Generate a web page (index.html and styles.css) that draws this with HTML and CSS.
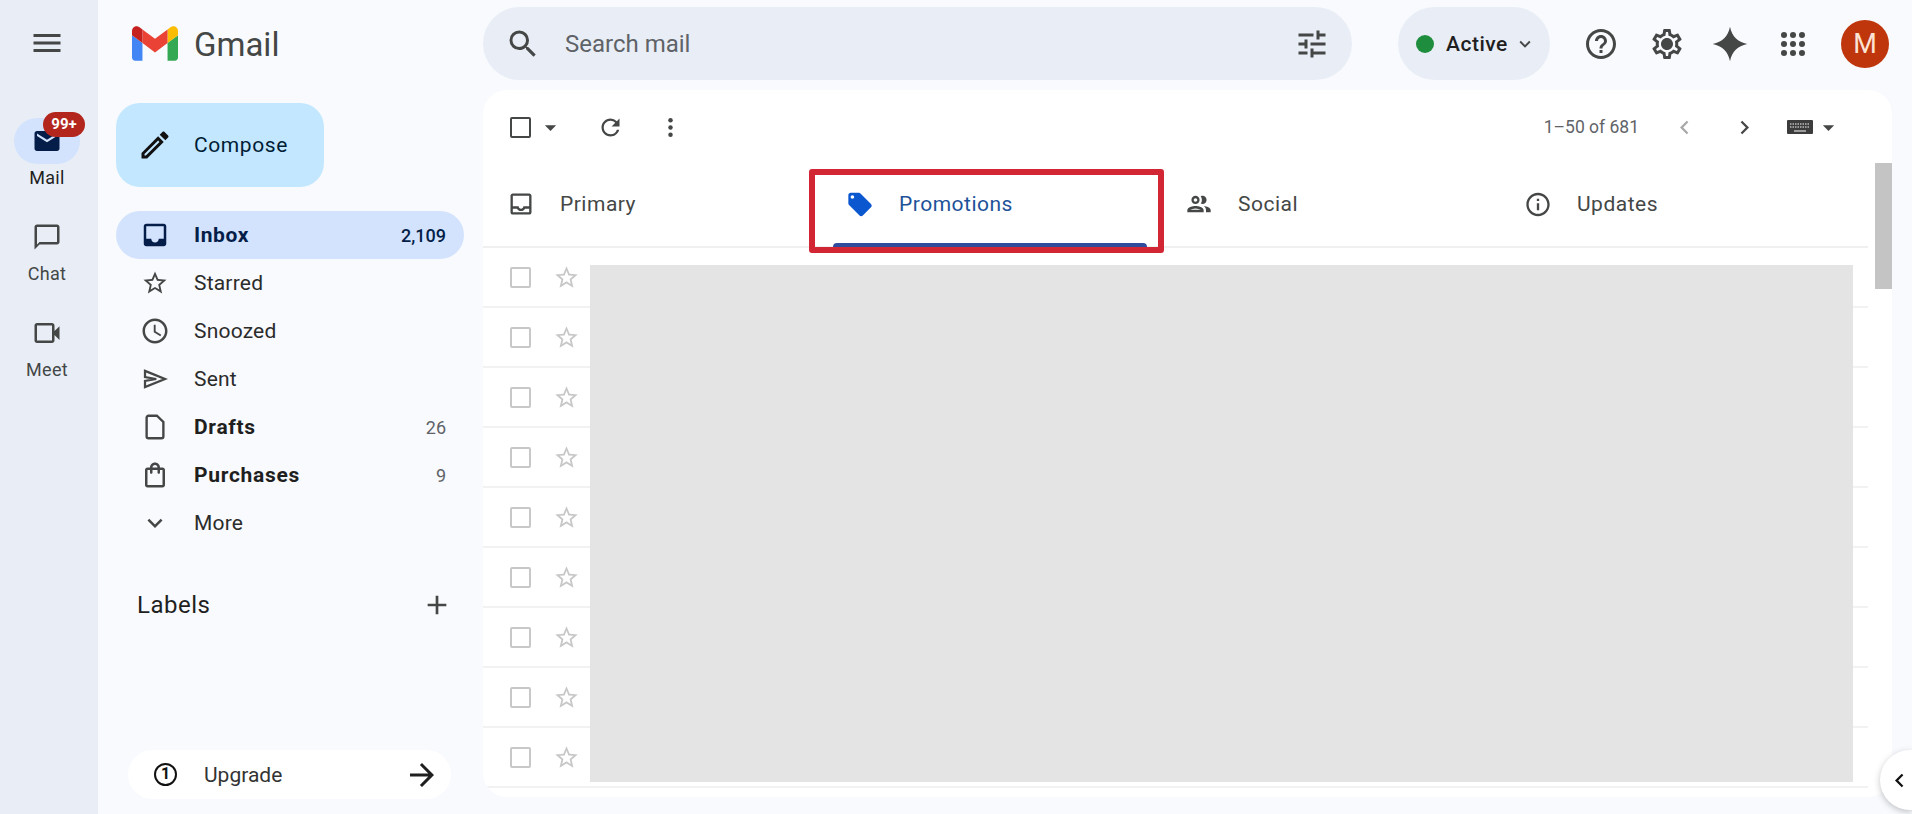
FILE: index.html
```html
<!DOCTYPE html>
<html lang="en">
<head>
    <meta charset="UTF-8">
    <title>Inbox - Gmail</title>
    <link rel="stylesheet" href="styles.css">
</head>
<body>
    <svg class="sprite" xmlns="http://www.w3.org/2000/svg">
        <symbol id="star" viewBox="0 0 24 24"><path d="M22 9.24l-7.19-.62L12 2 9.19 8.63 2 9.24l5.46 4.73L5.82 21 12 17.27 18.18 21l-1.63-7.03L22 9.24zM12 15.4l-3.76 2.27 1-4.28-3.32-2.88 4.38-.38L12 6.1l1.71 4.04 4.38.38-3.32 2.88 1 4.28L12 15.4z"/></symbol>
        <symbol id="caret" viewBox="0 0 24 24"><path d="M7 10l5 5 5-5z"/></symbol>
    </svg>

    <nav class="rail">
        <button class="rail-menu">
            <svg width="36" height="36" viewBox="0 0 24 24"><path d="M3 18h18v-2H3v2zm0-5h18v-2H3v2zm0-7v2h18V6H3z"/></svg>
        </button>
        <div class="rail-item active">
            <div class="rail-icon">
                <svg width="30" height="30" viewBox="0 0 24 24"><path d="M20 4H4c-1.1 0-2 .9-2 2v12c0 1.1.9 2 2 2h16c1.1 0 2-.9 2-2V6c0-1.1-.9-2-2-2zm0 4l-8 5-8-5V6l8 5 8-5v2z"/></svg>
            </div>
            <span class="badge">99+</span>
            <span class="rail-label">Mail</span>
        </div>
        <div class="rail-item">
            <div class="rail-icon">
                <svg width="30" height="30" viewBox="0 0 24 24"><path d="M20 2H4c-1.1 0-2 .9-2 2v18l4-4h14c1.1 0 2-.9 2-2V4c0-1.1-.9-2-2-2zm0 14H6l-2 2V4h16v12z"/></svg>
            </div>
            <span class="rail-label">Chat</span>
        </div>
        <div class="rail-item">
            <div class="rail-icon">
                <svg width="30" height="30" viewBox="0 0 24 24"><path d="M18 10.48V6c0-1.1-.9-2-2-2H4c-1.1 0-2 .9-2 2v12c0 1.1.9 2 2 2h12c1.1 0 2-.9 2-2v-4.48l4 3.98v-11l-4 3.98zm-2-.79V18H4V6h12v3.69z"/></svg>
            </div>
            <span class="rail-label">Meet</span>
        </div>
    </nav>

    <div class="app">
        <header class="topbar">
            <div class="brand">
                <svg class="brand-logo" width="46" height="35" viewBox="52 42 88 66">
                    <path fill="#4285f4" d="M58 108h14V74L52 59v43c0 3.32 2.69 6 6 6"/>
                    <path fill="#34a853" d="M120 108h14c3.32 0 6-2.69 6-6V59l-20 15"/>
                    <path fill="#fbbc04" d="M120 48v26l20-15v-8c0-7.42-8.47-11.65-14.4-7.2"/>
                    <path fill="#ea4335" d="M72 74V48l24 18 24-18v26L96 92"/>
                    <path fill="#c5221f" d="M52 51v8l20 15V48l-5.6-4.2c-5.94-4.45-14.4-.22-14.4 7.2"/>
                </svg>
                <span class="brand-name">Gmail</span>
            </div>
            <div class="search">
                <svg width="36" height="36" viewBox="0 0 24 24"><path d="M15.5 14h-.79l-.28-.27A6.471 6.471 0 0 0 16 9.5 6.5 6.5 0 1 0 9.5 16c1.61 0 3.09-.59 4.23-1.57l.27.28v.79l5 4.99L20.49 19l-4.99-5zm-6 0C7.01 14 5 11.99 5 9.5S7.01 5 9.5 5 14 7.01 14 9.5 11.99 14 9.5 14z"/></svg>
                <span class="search-text">Search mail</span>
                <svg width="36" height="36" viewBox="0 0 24 24"><path d="M3 17v2h6v-2H3zM3 5v2h10V5H3zm10 16v-2h8v-2h-8v-2h-2v6h2zM7 9v2H3v2h4v2h2V9H7zm14 4v-2H11v2h10zm-6-4h2V7h4V5h-4V3h-2v6z"/></svg>
            </div>
            <div class="status">
                <span class="status-dot"></span>
                <span class="status-text">Active</span>
                <svg width="22" height="22" viewBox="0 0 24 24"><path d="M16.59 8.59 12 13.17 7.41 8.59 6 10l6 6 6-6z"/></svg>
            </div>
            <div class="top-icons">
                <svg class="icon-help" width="36" height="36" viewBox="0 0 24 24"><path d="M11 18h2v-2h-2v2zm1-16C6.48 2 2 6.48 2 12s4.48 10 10 10 10-4.48 10-10S17.52 2 12 2zm0 18c-4.41 0-8-3.59-8-8s3.59-8 8-8 8 3.59 8 8-3.59 8-8 8zm0-14c-2.21 0-4 1.79-4 4h2c0-1.1.9-2 2-2s2 .9 2 2c0 2-3 1.75-3 5h2c0-2.25 3-2.5 3-5 0-2.21-1.79-4-4-4z"/></svg>
                <svg class="icon-gear" width="36" height="36" viewBox="0 0 24 24"><path d="M19.43 12.98c.04-.32.07-.64.07-.98 0-.34-.03-.66-.07-.98l2.11-1.65c.19-.15.24-.42.12-.64l-2-3.46c-.09-.16-.26-.25-.44-.25-.06 0-.12.01-.17.03l-2.49 1c-.52-.4-1.08-.73-1.69-.98l-.38-2.65C14.46 2.18 14.25 2 14 2h-4c-.25 0-.46.18-.49.42l-.38 2.65c-.61.25-1.17.59-1.69.98l-2.49-1c-.06-.02-.12-.03-.18-.03-.17 0-.34.09-.43.25l-2 3.46c-.13.22-.07.49.12.64l2.11 1.65c-.04.32-.07.65-.07.98 0 .33.03.66.07.98l-2.11 1.65c-.19.15-.24.42-.12.64l2 3.46c.09.16.26.25.44.25.06 0 .12-.01.17-.03l2.49-1c.52.4 1.08.73 1.69.98l.38 2.65c.03.24.24.42.49.42h4c.25 0 .46-.18.49-.42l.38-2.65c.61-.25 1.17-.59 1.69-.98l2.49 1c.06.02.12.03.18.03.17 0 .34-.09.43-.25l2-3.46c.12-.22.07-.49-.12-.64l-2.11-1.65zm-1.98-1.71c.04.31.05.52.05.73 0 .21-.02.43-.05.73l-.14 1.13.89.7 1.08.84-.7 1.21-1.27-.51-1.04-.42-.9.68c-.43.32-.84.56-1.25.73l-1.06.43-.16 1.13-.2 1.35h-1.4l-.19-1.35-.16-1.13-1.06-.43c-.43-.18-.83-.41-1.23-.71l-.91-.7-1.06.43-1.27.51-.7-1.21 1.08-.84.89-.7-.14-1.13c-.03-.31-.05-.54-.05-.74s.02-.43.05-.73l.14-1.13-.89-.7-1.08-.84.7-1.21 1.27.51 1.04.42.9-.68c.43-.32.84-.56 1.25-.73l1.06-.43.16-1.13.2-1.35h1.39l.19 1.35.16 1.13 1.06.43c.43.18.83.41 1.23.71l.91.7 1.06-.43 1.27-.51.7 1.21-1.07.85-.89.7.14 1.13zM12 8c-2.21 0-4 1.79-4 4s1.79 4 4 4 4-1.79 4-4-1.79-4-4-4z"/></svg>
                <svg class="icon-spark" width="36" height="36" viewBox="0 0 24 24"><path d="M12 .5c1.300 6.400 5.100 10.200 11.500 11.500-6.400 1.300-10.200 5.100-11.500 11.500-1.300-6.400-5.100-10.200-11.500-11.500 6.400-1.300 10.200-5.100 11.500-11.500z"/></svg>
                <svg class="icon-apps" width="36" height="36" viewBox="0 0 24 24">
                    <circle cx="6" cy="6" r="2"/><circle cx="12" cy="6" r="2"/><circle cx="18" cy="6" r="2"/>
                    <circle cx="6" cy="12" r="2"/><circle cx="12" cy="12" r="2"/><circle cx="18" cy="12" r="2"/>
                    <circle cx="6" cy="18" r="2"/><circle cx="12" cy="18" r="2"/><circle cx="18" cy="18" r="2"/>
                </svg>
                <span class="avatar">M</span>
            </div>
        </header>

        <div class="content">
            <aside class="sidebar">
                <button class="compose">
                    <svg width="36" height="36" viewBox="0 0 24 24"><path d="M3 17.25V21h3.75L17.81 9.94l-3.75-3.75L3 17.25zM5.92 19H5v-.92l9.06-9.06.92.92L5.92 19zM20.71 5.63l-2.34-2.34c-.2-.2-.45-.29-.71-.29s-.51.1-.7.29l-1.83 1.83 3.75 3.75 1.83-1.83c.39-.39.39-1.02 0-1.41z"/></svg>
                    <span>Compose</span>
                </button>

                <div class="nav-list">
                    <div class="nav-row selected">
                        <svg width="30" height="30" viewBox="0 0 24 24"><path d="M19 3H4.99c-1.11 0-1.98.89-1.98 2L3 19c0 1.1.88 2 1.99 2H19c1.1 0 2-.9 2-2V5c0-1.11-.9-2-2-2zm0 12h-4c0 1.66-1.35 3-3 3s-3-1.34-3-3H4.99V5H19v10z"/></svg>
                        <span class="nav-name">Inbox</span>
                        <span class="nav-count">2,109</span>
                    </div>
                    <div class="nav-row">
                        <svg width="30" height="30" viewBox="-1 -1 26 26"><use href="#star" width="24" height="24"/></svg>
                        <span class="nav-name">Starred</span>
                    </div>
                    <div class="nav-row">
                        <svg width="30" height="30" viewBox="0 0 24 24"><path d="M11.99 2C6.47 2 2 6.48 2 12s4.47 10 9.99 10C17.52 22 22 17.52 22 12S17.52 2 11.99 2zM12 20c-4.42 0-8-3.58-8-8s3.58-8 8-8 8 3.58 8 8-3.58 8-8 8zm.5-13H11v6l5.25 3.15.75-1.23-4.5-2.67z"/></svg>
                        <span class="nav-name">Snoozed</span>
                    </div>
                    <div class="nav-row">
                        <svg width="30" height="30" viewBox="0 0 24 24"><path fill="none" stroke="#444746" stroke-width="1.800" d="M4 5.500 20 12 4 18.500v-5l9-1.500-9-1.500z"/></svg>
                        <span class="nav-name">Sent</span>
                    </div>
                    <div class="nav-row bold">
                        <svg width="30" height="30" viewBox="0 0 24 24"><path fill="none" stroke="#444746" stroke-width="1.900" d="M13.500 3H6.800A1.500 1.500 0 0 0 5.300 4.500v15A1.500 1.500 0 0 0 6.800 21h10.400a1.500 1.500 0 0 0 1.500-1.500V8z"/></svg>
                        <span class="nav-name">Drafts</span>
                        <span class="nav-count">26</span>
                    </div>
                    <div class="nav-row bold">
                        <svg width="30" height="30" viewBox="0 0 24 24"><path d="M18 6h-2c0-2.210-1.790-4-4-4S8 3.790 8 6H6c-1.100 0-2 .9-2 2v12c0 1.100.9 2 2 2h12c1.100 0 2-.9 2-2V8c0-1.100-.9-2-2-2zm-6-2c1.100 0 2 .9 2 2h-4c0-1.100.9-2 2-2zm6 16H6V8h2v2c0 .55.45 1 1 1s1-.45 1-1V8h4v2c0 .55.45 1 1 1s1-.45 1-1V8h2v12z"/></svg>
                        <span class="nav-name">Purchases</span>
                        <span class="nav-count">9</span>
                    </div>
                    <div class="nav-row">
                        <svg width="30" height="30" viewBox="0 0 24 24"><path d="M16.59 8.59 12 13.17 7.41 8.59 6 10l6 6 6-6z"/></svg>
                        <span class="nav-name">More</span>
                    </div>
                </div>

                <div class="labels-head">
                    <span>Labels</span>
                    <svg width="32" height="32" viewBox="0 0 24 24"><path d="M19 13h-6v6h-2v-6H5v-2h6V5h2v6h6v2z"/></svg>
                </div>

                <div class="upgrade">
                    <span class="upgrade-num">1</span>
                    <span class="upgrade-text">Upgrade</span>
                    <svg width="36" height="36" viewBox="0 0 24 24"><path d="M12 4l-1.410 1.410L16.170 11H4v2h12.170l-5.580 5.590L12 20l8-8z"/></svg>
                </div>
            </aside>

            <main class="card">
                <div class="toolbar">
                    <span class="check dark"></span>
                    <svg class="tool-caret" width="27" height="27" viewBox="0 0 24 24"><use href="#caret"/></svg>
                    <svg class="tool-refresh" width="27" height="27" viewBox="0 0 24 24"><path d="M17.650 6.350A7.958 7.958 0 0 0 12 4c-4.420 0-7.990 3.580-7.990 8s3.570 8 7.990 8c3.730 0 6.840-2.550 7.730-6h-2.080A5.990 5.990 0 0 1 12 18c-3.310 0-6-2.690-6-6s2.690-6 6-6c1.660 0 3.140.690 4.220 1.780L13 11h7V4l-2.350 2.350z"/></svg>
                    <svg class="tool-more" width="27" height="27" viewBox="0 0 24 24"><circle cx="12" cy="5.500" r="2"/><circle cx="12" cy="12" r="2"/><circle cx="12" cy="18.500" r="2"/></svg>
                    <span class="pager">1–50 of 681</span>
                    <svg class="pager-prev" width="27" height="27" viewBox="0 0 24 24"><path d="M15.410 7.410 14 6l-6 6 6 6 1.410-1.410L10.830 12z"/></svg>
                    <svg class="pager-next" width="27" height="27" viewBox="0 0 24 24"><path d="M10 6 8.590 7.410 13.170 12l-4.580 4.590L10 18l6-6z"/></svg>
                    <svg class="keyboard" width="26" height="14" viewBox="0 0 26 14">
                        <rect width="26" height="14" rx="1" fill="#3c3c3c"/>
                        <path stroke="#bbb" stroke-width="1.500" stroke-dasharray="1.500 1" d="M3 4h20M3 7h20"/>
                        <path stroke="#bbb" stroke-width="1.500" d="M7 11h12"/>
                    </svg>
                    <svg class="tool-caret-end" width="27" height="27" viewBox="0 0 24 24"><use href="#caret"/></svg>
                </div>

                <div class="tabs">
                    <div class="tab">
                        <svg width="28" height="28" viewBox="0 0 24 24"><path d="M19 3H5c-1.100 0-2 .9-2 2v14c0 1.100.9 2 2 2h14c1.100 0 2-.9 2-2V5c0-1.100-.9-2-2-2zm0 16H5v-3h3.560c.69 1.190 1.970 2 3.450 2s2.750-.81 3.450-2H19v3zm0-5h-4.990c0 1.100-.9 2-2 2s-2-.9-2-2H5V5h14v9z"/></svg>
                        <span>Primary</span>
                    </div>
                    <div class="tab current">
                        <svg width="29" height="29" viewBox="0 0 24 24"><path d="M21.410 11.580l-9-9C12.050 2.220 11.550 2 11 2H4c-1.100 0-2 .9-2 2v7c0 .55.22 1.050.59 1.420l9 9c.36.36.86.58 1.410.58.55 0 1.050-.22 1.410-.59l7-7c.37-.36.59-.86.59-1.410 0-.55-.23-1.060-.59-1.420zM5.500 7C4.670 7 4 6.330 4 5.500S4.670 4 5.500 4 7 4.670 7 5.500 6.330 7 5.500 7z"/></svg>
                        <span>Promotions</span>
                    </div>
                    <div class="tab">
                        <svg width="30" height="30" viewBox="0 0 24 24"><path d="M9 13.750c-2.340 0-7 1.170-7 3.500V19h14v-1.750c0-2.330-4.660-3.500-7-3.500zM4.340 17c.84-.58 2.870-1.250 4.660-1.250s3.820.67 4.660 1.250H4.340zM9 12c1.930 0 3.500-1.570 3.500-3.500S10.930 5 9 5 5.500 6.570 5.500 8.500 7.070 12 9 12zm0-5c.83 0 1.500.67 1.500 1.500S9.830 10 9 10s-1.500-.67-1.500-1.500S8.170 7 9 7zm7.040 6.810c1.160.84 1.960 1.960 1.960 3.440V19h4v-1.750c0-2.020-3.500-3.170-5.960-3.440zM15 12c1.930 0 3.500-1.570 3.500-3.500S16.930 5 15 5c-.54 0-1.040.13-1.500.35.63.89 1 1.980 1 3.150s-.37 2.260-1 3.150c.46.22.96.35 1.500.35z"/></svg>
                        <span>Social</span>
                    </div>
                    <div class="tab">
                        <svg width="29" height="29" viewBox="0 0 24 24"><path d="M11 7h2v2h-2zm0 4h2v6h-2zm1-9C6.480 2 2 6.480 2 12s4.480 10 10 10 10-4.480 10-10S17.520 2 12 2zm0 18c-4.410 0-8-3.590-8-8s3.590-8 8-8 8 3.590 8 8-3.590 8-8 8z"/></svg>
                        <span>Updates</span>
                    </div>
                </div>

                <div class="rows">
                    <div class="row"><span class="check"></span><svg class="row-star" width="27" height="27" viewBox="0 0 24 24"><use href="#star"/></svg></div>
                    <div class="row"><span class="check"></span><svg class="row-star" width="27" height="27" viewBox="0 0 24 24"><use href="#star"/></svg></div>
                    <div class="row"><span class="check"></span><svg class="row-star" width="27" height="27" viewBox="0 0 24 24"><use href="#star"/></svg></div>
                    <div class="row"><span class="check"></span><svg class="row-star" width="27" height="27" viewBox="0 0 24 24"><use href="#star"/></svg></div>
                    <div class="row"><span class="check"></span><svg class="row-star" width="27" height="27" viewBox="0 0 24 24"><use href="#star"/></svg></div>
                    <div class="row"><span class="check"></span><svg class="row-star" width="27" height="27" viewBox="0 0 24 24"><use href="#star"/></svg></div>
                    <div class="row"><span class="check"></span><svg class="row-star" width="27" height="27" viewBox="0 0 24 24"><use href="#star"/></svg></div>
                    <div class="row"><span class="check"></span><svg class="row-star" width="27" height="27" viewBox="0 0 24 24"><use href="#star"/></svg></div>
                    <div class="row"><span class="check"></span><svg class="row-star" width="27" height="27" viewBox="0 0 24 24"><use href="#star"/></svg></div>
                </div>

                <!-- things drawn over the list -->
                <div class="redacted"></div>
                <div class="highlight"></div>
                <div class="scroll-thumb"></div>
            </main>
        </div>
    </div>

    <div class="side-toggle">
        <svg width="27" height="27" viewBox="0 0 24 24"><path d="M15.410 7.410 14 6l-6 6 6 6 1.410-1.410L10.830 12z"/></svg>
    </div>
</body>
</html>
```

FILE: styles.css
```css
/* Basic styling */
* {
    box-sizing: border-box;
}
body {
    font-family: Roboto, "Liberation Sans", sans-serif;
    background-color: #f8fafd;
    color: #1f1f1f;
    margin: 0;
    height: 100vh;
    display: flex;
    overflow: hidden;
    position: relative;
}
svg {
    fill: #444746;
    flex-shrink: 0;
    display: block;
}
button {
    border: none;
    background: none;
    padding: 0;
    font: inherit;
    color: inherit;
}
.sprite {
    display: none;
}

/* left rail */
.rail {
    width: 98px;
    flex-shrink: 0;
    background-color: #e9eef6;
    padding: 25px 4px 0 0;
    display: flex;
    flex-direction: column;
    align-items: center;
}
.rail-menu {
    height: 36px;
    margin-bottom: 57px;
}
.rail-item {
    width: 94px;
    height: 96px;
    position: relative;
    display: flex;
    flex-direction: column;
    align-items: center;
}
.rail-icon {
    width: 66px;
    height: 46px;
    border-radius: 23px;
    display: flex;
    align-items: center;
    justify-content: center;
}
.rail-item.active .rail-icon {
    background-color: #d3e3fd;
}
.rail-item.active svg {
    fill: #041e49;
}
.rail-label {
    font-size: 18px;
    line-height: 24px;
    margin-top: 2px;
    letter-spacing: 0.3px;
    color: #444746;
}
.rail-item.active .rail-label {
    color: #1f1f1f;
}
.badge {
    position: absolute;
    left: 43px;
    top: -6px;
    width: 42px;
    height: 25px;
    border-radius: 13px;
    background-color: #b3261e;
    color: #fff;
    font-size: 15px;
    font-weight: 700;
    line-height: 25px;
    text-align: center;
}

/* header */
.app {
    flex: 1;
    min-width: 0;
    display: flex;
    flex-direction: column;
}
.topbar {
    height: 90px;
    flex-shrink: 0;
    display: flex;
    align-items: center;
    padding-bottom: 3px;
}
.brand {
    width: 385px;
    padding-left: 34px;
    display: flex;
    align-items: center;
    gap: 16px;
}
.brand-name {
    font-size: 33px;
    padding-top: 1px;
    color: #444746;
}
.search {
    width: 869px;
    height: 73px;
    border-radius: 37px;
    background-color: #e9eef6;
    display: flex;
    align-items: center;
    padding: 0 22px;
}
.search-text {
    flex: 1;
    margin-left: 24px;
    font-size: 24px;
    color: #5f6368;
}
.status {
    width: 152px;
    height: 73px;
    margin-left: 46px;
    border-radius: 37px;
    background-color: #e9eef6;
    display: flex;
    align-items: center;
    padding-left: 18px;
}
.status-dot {
    width: 18px;
    height: 18px;
    border-radius: 50%;
    background-color: #1e8e3e;
}
.status-text {
    font-size: 21px;
    font-weight: 500;
    letter-spacing: 0.5px;
    padding-top: 1px;
    margin: 0 6px 0 12px;
}
.top-icons {
    display: flex;
    align-items: center;
    margin-left: 33px;
}
.icon-gear {
    margin-left: 30px;
}
.icon-spark {
    margin-left: 27px;
}
.icon-apps {
    margin-left: 27px;
}
.avatar {
    width: 48px;
    height: 48px;
    margin-left: 30px;
    border-radius: 50%;
    background-color: #bf360c;
    color: #fde3d3;
    font-size: 27px;
    line-height: 48px;
    text-align: center;
}

/* sidebar */
.content {
    flex: 1;
    min-height: 0;
    display: flex;
}
.sidebar {
    width: 385px;
    flex-shrink: 0;
    padding: 13px 19px 15px 18px;
    display: flex;
    flex-direction: column;
}
.compose {
    width: 208px;
    height: 84px;
    border-radius: 24px;
    background-color: #c2e7ff;
    display: flex;
    align-items: center;
    padding-left: 21px;
    gap: 21px;
    font-size: 21px;
    letter-spacing: 0.6px;
    color: #001d35;
}
.compose svg {
    fill: #111;
}
.nav-list {
    margin-top: 24px;
}
.nav-row {
    height: 48px;
    border-radius: 24px;
    display: flex;
    align-items: center;
    padding: 0 18px 0 24px;
    gap: 24px;
    font-size: 21px;
    letter-spacing: 0.2px;
    color: #2b2b2b;
}
.nav-name {
    flex: 1;
}
.nav-count {
    font-size: 18px;
    letter-spacing: 0;
    color: #5f6368;
}
.nav-row.bold .nav-name {
    font-weight: 700;
    letter-spacing: 0.7px;
    color: #1f1f1f;
}
.nav-row.selected {
    background-color: #d3e3fd;
    color: #041e49;
    font-weight: 700;
    letter-spacing: 0.6px;
}
.nav-row.selected svg {
    fill: #041e49;
}
.nav-row.selected .nav-count {
    color: #041e49;
    font-weight: 500;
}
.labels-head {
    height: 40px;
    margin-top: 38px;
    padding: 0 11px 0 21px;
    display: flex;
    align-items: center;
    justify-content: space-between;
    font-size: 24px;
    letter-spacing: 0.5px;
}
.upgrade {
    width: 323px;
    height: 49px;
    margin: auto 0 0 12px;
    border-radius: 25px;
    background-color: #fff;
    display: flex;
    align-items: center;
    padding: 0 11px 0 26px;
    font-size: 21px;
    color: #333;
}
.upgrade svg {
    fill: #1f1f1f;
}
.upgrade-num {
    width: 23px;
    height: 23px;
    border: 2.5px solid #111;
    border-radius: 50%;
    color: #111;
    font-size: 16px;
    font-weight: 700;
    line-height: 18px;
    text-align: center;
}
.upgrade-text {
    flex: 1;
    margin-left: 27px;
}

/* mail card */
.card {
    width: 1409px;
    height: 707px;
    background: #fff;
    border-radius: 24px;
    position: relative;
    overflow: hidden;
}
.toolbar {
    height: 74px;
    display: flex;
    align-items: center;
    padding-left: 27px;
    padding-right: 50px;
}
.check {
    width: 21px;
    height: 21px;
    border: 2px solid #c8c8c8;
    border-radius: 2px;
}
.check.dark {
    border: 2.5px solid #444746;
}
.tool-caret {
    margin-left: 6px;
}
.tool-refresh {
    margin-left: 33px;
}
.tool-more {
    margin-left: 33px;
}
.pager {
    margin-left: auto;
    font-size: 17.5px;
    color: #5f6368;
}
.pager-prev {
    margin-left: 32px;
    fill: #a8a8a8;
}
.pager-next {
    margin-left: 33px;
}
.keyboard {
    margin-left: 29px;
}
.tool-caret-end {
    margin-left: 2px;
}
.tabs {
    height: 84px;
    width: 1385px;
    display: flex;
    border-bottom: 2px solid #f0f0f0;
}
.tab {
    width: 339px;
    height: 82px;
    padding: 0 0 2px 24px;
    display: flex;
    align-items: center;
    font-size: 21px;
    letter-spacing: 0.5px;
    color: #444746;
    position: relative;
}
.tab svg {
    width: 28px;
}
.tab span {
    margin-left: 25px;
}
.tab.current {
    color: #1d5299;
}
.tab.current svg {
    fill: #0b57d0;
}
.tab.current::after {
    content: "";
    position: absolute;
    left: 11px;
    right: 14px;
    bottom: -2px;
    height: 5px;
    background-color: #2f4b9c;
    border-radius: 4px 4px 0 0;
}
.rows {
    width: 1385px;
}
.row {
    height: 60px;
    border-bottom: 2px solid #f2f2f2;
    display: flex;
    align-items: center;
    padding-left: 27px;
}
.row-star {
    margin-left: 22px;
    fill: #c8c8c8;
}
.redacted {
    position: absolute;
    left: 107px;
    top: 175px;
    width: 1263px;
    height: 517px;
    background-color: #e4e4e4;
}
.highlight {
    position: absolute;
    left: 326px;
    top: 79px;
    width: 355px;
    height: 84px;
    border: 6px solid #d32634;
    border-radius: 3px;
}
.scroll-thumb {
    position: absolute;
    right: 0;
    top: 73px;
    width: 17px;
    height: 126px;
    background-color: #c4c4c4;
}
.side-toggle {
    position: absolute;
    right: 0;
    bottom: 4px;
    width: 32px;
    height: 60px;
    border-radius: 30px 0 0 30px;
    background-color: #fff;
    box-shadow: 0 2px 6px rgba(60, 64, 67, 0.3);
    display: flex;
    align-items: center;
    padding-left: 6px;
}
.side-toggle svg {
    fill: #111;
}
```
